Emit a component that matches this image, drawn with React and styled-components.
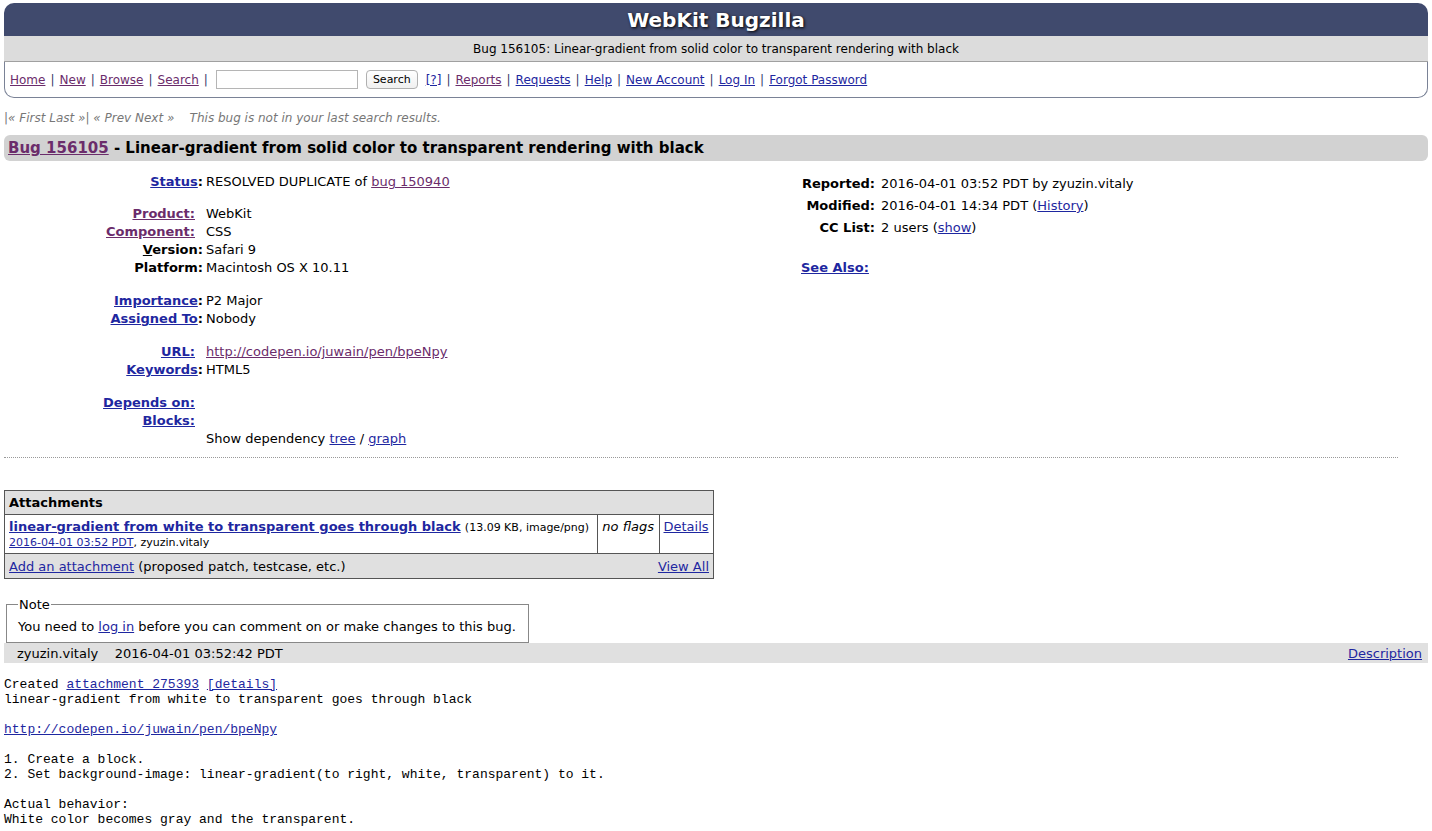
import { createGlobalStyle, styled } from "styled-components";

const GlobalStyle = createGlobalStyle`
    html, body {
        margin: 0;
        padding: 0;
        background: #fff;
    }
    body {
        font-family: "DejaVu Sans", Verdana, sans-serif;
        font-size: 13px;
        color: #000;
    }
    a {
        color: #1e27a0;
    }
`;

const VISITED = "#6b2c6b";

const Page = styled.div`
    padding: 3px 4px 0;
`;

const Banner = styled.div`
    background: #404a6d;
    border-radius: 10px 10px 0 0;
    height: 33px;
    display: flex;
    align-items: center;
    justify-content: center;
    color: #fff;
    font-weight: bold;
    font-size: 20px;
    text-shadow: 1px 1px 3px #000;
`;

const SubBanner = styled.div`
    background: #dcdcdc;
    border-bottom: 1px solid #a0a0a0;
    height: 25px;
    display: flex;
    align-items: center;
    justify-content: center;
    font-size: 12px;
`;

const LinksBar = styled.div`
    border: 1px solid #7a8296;
    border-top: none;
    border-radius: 0 0 10px 10px;
    height: 35px;
    display: flex;
    align-items: center;
    padding-left: 5px;
    font-size: 12px;
    word-spacing: 1.2px;
    color: #333a6a;
    white-space: pre;
`;

const NavLink = styled.a`
    color: ${(p) => (p.$visited ? VISITED : "#1e27a0")};
    word-spacing: normal;
`;

const QuickSearch = styled.input`
    width: 136px;
    height: 15px;
    margin: 0 8px 0 3px;
    border: 1px solid #b5b5b5;
    padding: 1px 2px;
`;

const SearchButton = styled.button`
    font-family: "DejaVu Sans", Verdana, sans-serif;
    font-size: 11px;
    height: 19px;
    padding: 0 6px;
    margin-right: 8px;
    border: 1px solid #b0b0b0;
    border-radius: 4px;
    background: linear-gradient(#fff, #f0f0f0);
`;

const SearchNav = styled.div`
    margin-top: 13px;
    font-size: 12px;
    font-style: italic;
    color: #777;
    white-space: pre;
`;

const TitleBar = styled.h1`
    margin: 10px 0 0;
    background: #d2d2d2;
    border-radius: 6px;
    height: 26px;
    display: flex;
    align-items: center;
    padding-left: 4px;
    font-size: 15px;
    font-weight: bold;
    a {
        color: ${VISITED};
    }
`;

const Fields = styled.div`
    display: flex;
    margin-top: 12px;
`;

const FieldGrid = styled.div`
    display: grid;
    grid-template-columns: ${(p) => p.$labelWidth}px auto;
    column-gap: ${(p) => p.$gap}px;
    line-height: ${(p) => p.$row}px;
    width: ${(p) => p.$width}px;
    align-content: start;
`;

const Label = styled.div`
    text-align: right;
    font-weight: bold;
    min-height: 1lh;
    padding-right: ${(p) => (p.$inset ? 8 : 0)}px;
    a {
        color: ${(p) => (p.$visited ? VISITED : "#1e27a0")};
    }
`;

const Value = styled.div`
    white-space: nowrap;
    min-height: 1lh;
`;

const Spacer = styled.div`
    grid-column: 1 / -1;
    height: ${(p) => p.$h}px;
`;

const SeeAlso = styled.a`
    grid-column: 1 / -1;
    font-weight: bold;
    margin-left: 1px;
    margin-top: 18px;
    justify-self: start;
`;

const Rule = styled.hr`
    border: none;
    border-top: 1px dotted #999;
    margin: 9px 30px 0 0;
`;

const AttachTable = styled.table`
    margin-top: 32px;
    border-collapse: collapse;
    width: 710px;
    border: 1px solid #555;
    td,
    th {
        border: 1px solid #555;
        padding: 2px 4px;
    }
`;

const AttachHead = styled.th`
    background: #e0e0e0;
    text-align: left;
    height: 19px;
`;

const AttachRow = styled.tr`
    td {
        padding: 4px 4px 4px;
    }
`;

const AttachName = styled.a`
    font-weight: bold;
`;

const Small = styled.span`
    font-size: 11px;
`;

const Flags = styled.td`
    font-style: italic;
    white-space: nowrap;
    vertical-align: top;
`;

const DetailsCell = styled.td`
    vertical-align: top;
`;

const AttachFoot = styled.td`
    background: #e0e0e0;
    height: 20px;
`;

const FootRow = styled.div`
    display: flex;
    justify-content: space-between;
`;

const Note = styled.fieldset`
    margin: 18px 0 0 2px;
    width: 498px;
    border: 1px solid #888;
    padding: 7px 12px 8px 11px;
    legend {
        padding: 0 1px;
    }
`;

const CommentHead = styled.div`
    background: #e0e0e0;
    height: 20px;
    display: flex;
    align-items: center;
    padding: 0 6px 0 13px;
    white-space: pre;
`;

const CommentDate = styled.span`
    flex: 1;
`;

const CommentText = styled.pre`
    margin: 14px 0 0;
    font-family: "Liberation Mono", "Courier New", monospace;
    font-size: 13px;
    line-height: 15px;
    a {
        color: #1e27a0;
    }
`;

const VisitedLink = styled.a`
    color: ${VISITED};
`;

const navLinks = [
    ["Home", true],
    ["New", true],
    ["Browse", true],
    ["Search", true],
];
const navLinks2 = [
    ["Reports", true],
    ["Requests", false],
    ["Help", false],
    ["New Account", false],
    ["Log In", false],
    ["Forgot Password", false],
];

export default function App() {
    return (
        <Page>
            <GlobalStyle />
            <Banner>WebKit Bugzilla</Banner>
            <SubBanner>
                Bug 156105: Linear-gradient from solid color to transparent
                rendering with black
            </SubBanner>
            <LinksBar>
                {navLinks.map(([t, v]) => (
                    <span key={t}>
                        <NavLink href="#" $visited={v}>
                            {t}
                        </NavLink>
                        {" | "}
                    </span>
                ))}
                <QuickSearch />
                <SearchButton>Search</SearchButton>
                <NavLink href="#">[?]</NavLink>
                {navLinks2.map(([t, v]) => (
                    <span key={t}>
                        {" | "}
                        <NavLink href="#" $visited={v}>
                            {t}
                        </NavLink>
                    </span>
                ))}
            </LinksBar>

            <SearchNav>
                |« First Last »| « Prev Next »    This bug is not in your last
                search results.
            </SearchNav>

            <TitleBar>
                <a href="#">Bug 156105</a>&nbsp;- Linear-gradient from solid
                color to transparent rendering with black
            </TitleBar>

            <Fields>
                <FieldGrid $labelWidth={199} $gap={3} $row={18} $width={796}>
                    <Label>
                        <a href="#">Status</a>:
                    </Label>
                    <Value>
                        RESOLVED DUPLICATE of{" "}
                        <VisitedLink href="#">bug 150940</VisitedLink>
                    </Value>
                    <Spacer $h={14} />
                    <Label $inset $visited>
                        <a href="#">Product:</a>
                    </Label>
                    <Value>WebKit</Value>
                    <Label $inset $visited>
                        <a href="#">Component:</a>
                    </Label>
                    <Value>CSS</Value>
                    <Label>
                        <u>V</u>ersion:
                    </Label>
                    <Value>Safari 9</Value>
                    <Label>Platform:</Label>
                    <Value>Macintosh OS X 10.11</Value>
                    <Spacer $h={15} />
                    <Label>
                        <a href="#">Importance</a>:
                    </Label>
                    <Value>P2 Major</Value>
                    <Label>
                        <a href="#">Assigned To</a>:
                    </Label>
                    <Value>Nobody</Value>
                    <Spacer $h={15} />
                    <Label $inset>
                        <a href="#">URL:</a>
                    </Label>
                    <Value>
                        <VisitedLink href="#">
                            http://codepen.io/juwain/pen/bpeNpy
                        </VisitedLink>
                    </Value>
                    <Label>
                        <a href="#">Keywords</a>:
                    </Label>
                    <Value>HTML5</Value>
                    <Spacer $h={15} />
                    <Label $inset>
                        <a href="#">Depends on:</a>
                    </Label>
                    <Value />
                    <Label $inset>
                        <a href="#">Blocks:</a>
                    </Label>
                    <Value />
                    <Label />
                    <Value>
                        Show dependency <a href="#">tree</a> /{" "}
                        <a href="#">graph</a>
                    </Value>
                </FieldGrid>

                <FieldGrid $labelWidth={75} $gap={6} $row={22} $width={500}>
                    <Label>Reported:</Label>
                    <Value>2016-04-01 03:52 PDT by zyuzin.vitaly</Value>
                    <Label>Modified:</Label>
                    <Value>
                        2016-04-01 14:34 PDT (<a href="#">History</a>)
                    </Value>
                    <Label>CC List:</Label>
                    <Value>
                        2 users (<a href="#">show</a>)
                    </Value>
                    <SeeAlso href="#">See Also:</SeeAlso>
                </FieldGrid>
            </Fields>

            <Rule />

            <AttachTable>
                <thead>
                    <tr>
                        <AttachHead colSpan={3}>Attachments</AttachHead>
                    </tr>
                </thead>
                <tbody>
                    <AttachRow>
                        <td>
                            <AttachName href="#">
                                linear-gradient from white to transparent goes
                                through black
                            </AttachName>{" "}
                            <Small>(13.09 KB, image/png)</Small>
                            <br />
                            <Small>
                                <a href="#">2016-04-01 03:52 PDT</a>,
                                zyuzin.vitaly
                            </Small>
                        </td>
                        <Flags>no flags</Flags>
                        <DetailsCell>
                            <a href="#">Details</a>
                        </DetailsCell>
                    </AttachRow>
                    <tr>
                        <AttachFoot colSpan={3}>
                            <FootRow>
                                <span>
                                    <a href="#">Add an attachment</a> (proposed
                                    patch, testcase, etc.)
                                </span>
                                <a href="#">View All</a>
                            </FootRow>
                        </AttachFoot>
                    </tr>
                </tbody>
            </AttachTable>

            <Note>
                <legend>Note</legend>
                You need to <a href="#">log in</a> before you can comment on or
                make changes to this bug.
            </Note>

            <CommentHead>
                zyuzin.vitaly    <CommentDate>2016-04-01 03:52:42 PDT</CommentDate>
                <a href="#">Description</a>
            </CommentHead>

            <CommentText>
                Created <a href="#">attachment 275393</a>{" "}
                <a href="#">[details]</a>
                {"\nlinear-gradient from white to transparent goes through black\n\n"}
                <VisitedLink href="#">http://codepen.io/juwain/pen/bpeNpy</VisitedLink>
                {"\n\n1. Create a block.\n2. Set background-image: linear-gradient(to right, white, transparent) to it.\n\nActual behavior:\nWhite color becomes gray and the transparent."}
            </CommentText>
        </Page>
    );
}
